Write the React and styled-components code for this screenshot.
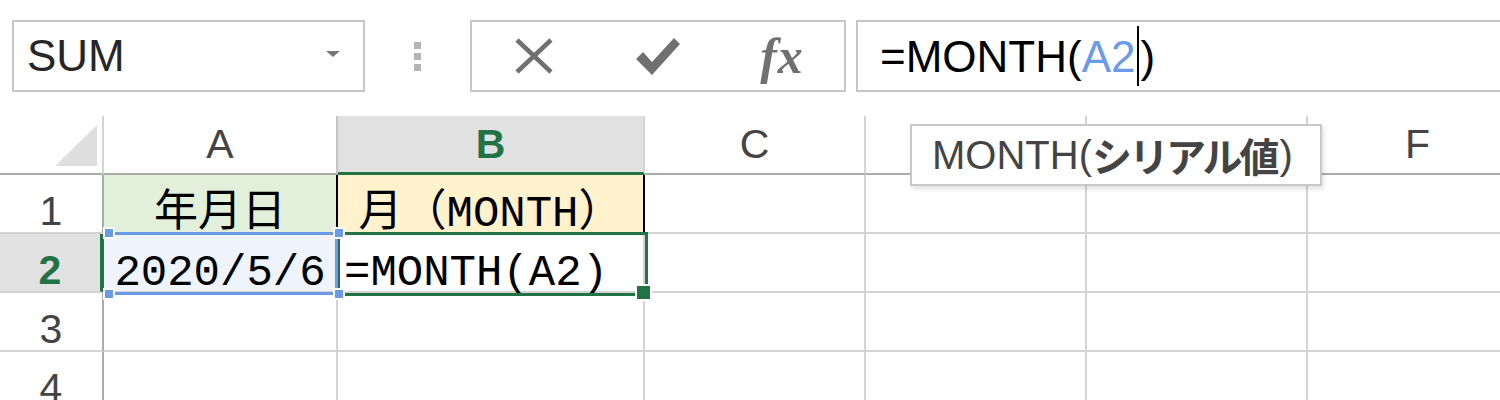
import React from 'react';
import styled, { createGlobalStyle } from 'styled-components';

const GlobalStyle = createGlobalStyle`
  html, body {
    margin: 0;
    padding: 0;
    background: #ffffff;
  }
`;

const GREEN = '#217346';
const GRID = '#d4d4d4';
const HEAD_LINE = '#ababab';
const BLUE = '#6b9ae9';

const Page = styled.div`
  position: relative;
  width: 1500px;
  height: 400px;
  overflow: hidden;
  font-family: "Liberation Sans", "Noto Sans CJK JP", sans-serif;
`;

const Toolbar = styled.div`
  display: flex;
  height: 72px;
  padding: 20px 0 0 12px;
`;

const NameBox = styled.div`
  box-sizing: border-box;
  flex-shrink: 0;
  width: 353px;
  display: flex;
  align-items: center;
  justify-content: space-between;
  padding: 0 23px 0 13px;
  border: 2px solid #c6c6c6;
  font-size: 44px;
  color: #262626;
`;

const DropArrow = styled.span`
  width: 0;
  height: 0;
  border-left: 7px solid transparent;
  border-right: 7px solid transparent;
  border-top: 6px solid #777777;
  margin-bottom: 4px;
`;

const Grip = styled.div`
  flex-shrink: 0;
  width: 105px;
  display: flex;
  flex-direction: column;
  align-items: center;
  justify-content: center;
  gap: 4px;
`;

const GripDot = styled.span`
  width: 7px;
  height: 7px;
  background: #b4b4b4;
`;

const FxButtons = styled.div`
  box-sizing: border-box;
  flex-shrink: 0;
  width: 376px;
  display: grid;
  grid-template-columns: repeat(3, 1fr);
  place-items: center;
  border: 2px solid #c6c6c6;
`;

const FxGlyph = styled.span`
  font-family: "Liberation Serif", serif;
  font-style: italic;
  font-weight: bold;
  font-size: 50px;
  line-height: 1;
  color: #707070;
  letter-spacing: 1px;
`;

const FormulaBar = styled.div`
  box-sizing: border-box;
  flex-shrink: 0;
  width: 700px;
  margin-left: 10px;
  display: flex;
  align-items: center;
  padding-left: 22px;
  border: 2px solid #c6c6c6;
  font-size: 44px;
  color: #000000;
  white-space: pre;
`;

const RefText = styled.span`
  color: ${BLUE};
`;

const Caret = styled.span`
  display: inline-block;
  width: 2px;
  height: 60px;
  background: #000000;
  vertical-align: -14px;
  margin: 0 1px 0 2px;
`;

const Sheet = styled.div`
  position: relative;
  display: grid;
  grid-template-columns: 104px 234px 307px 221px 221px 221px 221px;
  grid-template-rows: repeat(5, 59px);
  margin-top: 24px;
`;

const Corner = styled.div`
  box-sizing: border-box;
  display: flex;
  align-items: flex-end;
  justify-content: flex-end;
  padding: 0 5px 7px 0;
  border-right: 2px solid ${GRID};
  border-bottom: 2px solid ${HEAD_LINE};
`;

const ColHead = styled.div`
  box-sizing: border-box;
  display: flex;
  align-items: center;
  justify-content: center;
  background: ${(p) => (p.$active ? '#e1e1e1' : '#ffffff')};
  border-right: 2px solid ${(p) => (p.$edge ? '#c6c6c6' : GRID)};
  border-bottom: ${(p) => (p.$active ? `3px solid ${GREEN}` : `2px solid ${HEAD_LINE}`)};
  font-size: 41px;
  font-weight: ${(p) => (p.$active ? 'bold' : 'normal')};
  color: ${(p) => (p.$active ? GREEN : '#444444')};
`;

const RowHead = styled.div`
  box-sizing: border-box;
  display: flex;
  align-items: flex-end;
  justify-content: center;
  background: ${(p) => (p.$active ? '#e1e1e1' : '#ffffff')};
  border-right: ${(p) => (p.$active ? `4px solid ${GREEN}` : `2px solid ${HEAD_LINE}`)};
  border-bottom: 2px solid ${GRID};
  font-size: 41px;
  line-height: 1;
  font-weight: ${(p) => (p.$active ? 'bold' : 'normal')};
  color: ${(p) => (p.$active ? GREEN : '#444444')};
`;

const Cell = styled.div`
  box-sizing: border-box;
  display: flex;
  align-items: flex-end;
  justify-content: ${(p) => (p.$align === 'left' ? 'flex-start' : 'center')};
  padding-left: ${(p) => (p.$align === 'left' ? '6px' : '0')};
  background: ${(p) => p.$bg || '#ffffff'};
  border-right: 2px solid ${(p) => p.$line || GRID};
  border-bottom: 2px solid ${GRID};
  font-family: "Liberation Mono", "Noto Sans CJK JP", monospace;
  font-size: 44px;
  line-height: 0.8;
  color: #000000;
  white-space: pre;
  overflow: visible;
`;

const ActiveBorder = styled.div`
  position: absolute;
  left: 337px;
  top: 116px;
  width: 311px;
  height: 64px;
  box-sizing: border-box;
  border: 3px solid ${GREEN};
`;

const FillHandle = styled.div`
  position: absolute;
  left: 635px;
  top: 168px;
  width: 13px;
  height: 13px;
  background: ${GREEN};
  border: 2px solid #ffffff;
`;

const RangeBorder = styled.div`
  position: absolute;
  left: 104px;
  top: 116px;
  width: 234px;
  height: 63px;
  box-sizing: border-box;
  border: 3px solid ${BLUE};
  border-left: none;
`;

const RangeHandle = styled.div`
  position: absolute;
  left: ${(p) => p.$x}px;
  top: ${(p) => p.$y}px;
  width: 8px;
  height: 8px;
  background: ${BLUE};
  border: 2px solid #ffffff;
`;

const Tooltip = styled.div`
  position: absolute;
  left: 910px;
  top: 124px;
  width: 412px;
  height: 62px;
  box-sizing: border-box;
  display: flex;
  align-items: center;
  padding-left: 20px;
  background: #ffffff;
  border: 2px solid #c8c8c8;
  box-shadow: 2px 3px 5px rgba(0, 0, 0, 0.12);
  font-size: 40px;
  color: #444444;
  white-space: pre;
  z-index: 2;
`;

const ArgName = styled.b`
  font-weight: bold;
  letter-spacing: -3px;
  margin-right: 3px;
`;

const columns = ['A', 'B', 'C', 'D', 'E', 'F'];

const rows = [
  {
    num: 1,
    cells: [
      { text: '年月日', bg: '#e2efda', line: '#000000' },
      { text: '月（MONTH）', bg: '#fff2cc', line: '#000000' },
    ],
  },
  {
    num: 2,
    active: true,
    cells: [
      { text: '2020/5/6', bg: '#eef3fc' },
      { text: '=MONTH(A2)', align: 'left' },
    ],
  },
  { num: 3, cells: [] },
  { num: 4, cells: [] },
];

const CrossIcon = () => (
  <svg width="40" height="38" viewBox="0 0 40 38">
    <path d="M3 3 L37 35 M37 3 L3 35" stroke="#707070" strokeWidth="4.5" fill="none" />
  </svg>
);

const CheckIcon = () => (
  <svg width="44" height="39" viewBox="0 0 44 39">
    <polygon points="0,22 7,15 16,25 38,1 44,7 16,38" fill="#707070" />
  </svg>
);

const App = () => {
  return (
    <Page>
      <GlobalStyle />
      <Toolbar>
        <NameBox>
          <span>SUM</span>
          <DropArrow />
        </NameBox>
        <Grip>
          <GripDot />
          <GripDot />
          <GripDot />
        </Grip>
        <FxButtons>
          <CrossIcon />
          <CheckIcon />
          <FxGlyph>fx</FxGlyph>
        </FxButtons>
        <FormulaBar>
          <span>
            =MONTH(<RefText>A2</RefText>
            <Caret />)
          </span>
        </FormulaBar>
      </Toolbar>

      <Sheet>
        <Corner>
          <svg width="42" height="41" viewBox="0 0 42 41">
            <polygon points="42,0 42,41 0,41" fill="#dfdfdf" />
          </svg>
        </Corner>
        {columns.map((col) => (
          <ColHead key={col} $active={col === 'B'} $edge={col === 'A'}>
            {col}
          </ColHead>
        ))}

        {rows.map((row) => (
          <React.Fragment key={row.num}>
            <RowHead $active={row.active}>{row.num}</RowHead>
            {columns.map((col, i) => {
              const c = row.cells[i] || {};
              return (
                <Cell key={col} $bg={c.bg} $line={c.line} $align={c.align}>
                  {c.text || ''}
                </Cell>
              );
            })}
          </React.Fragment>
        ))}

        <ActiveBorder />
        <FillHandle />
        <RangeBorder />
        <RangeHandle $x={103} $y={111} />
        <RangeHandle $x={333} $y={111} />
        <RangeHandle $x={103} $y={172} />
        <RangeHandle $x={333} $y={172} />
      </Sheet>

      <Tooltip>
        MONTH(<ArgName>シリアル値</ArgName>)
      </Tooltip>
    </Page>
  );
};

export default App;
